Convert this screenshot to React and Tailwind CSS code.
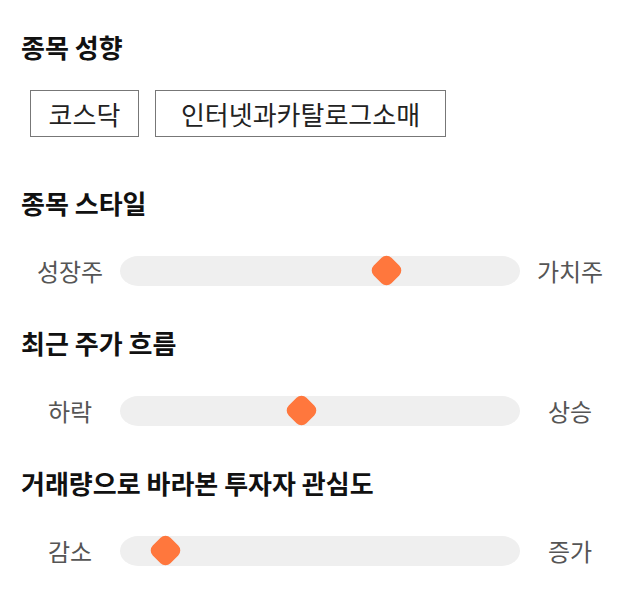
const sliders = [
  { title: '종목 스타일', left: '성장주', right: '가치주', value: 266 },
  { title: '최근 주가 흐름', left: '하락', right: '상승', value: 181 },
  { title: '거래량으로 바라본 투자자 관심도', left: '감소', right: '증가', value: 45 },
];

function Slider({ left, right, value }) {
  return (
    <div className="flex items-center h-[30px]">
      <span className="w-[100px] text-center text-[24px] leading-[30px] text-[#555]">{left}</span>
      <div className="relative flex-1 h-[30px] bg-[#efefef] rounded-[18px/15px]">
        <div
          className="absolute top-[-1px] w-[30px] h-[30px] -ml-[15px] flex items-center justify-center"
          style={{ left: value }}
        >
          <div className="w-[25px] h-[25px] rotate-45 rounded-[7px] bg-[#ff773d]" />
        </div>
      </div>
      <span className="w-[100px] text-center text-[24px] leading-[30px] text-[#555]">{right}</span>
    </div>
  );
}

export default function App() {
  return (
    <div className="w-[640px] h-[606px] bg-white px-[20px] pt-[32px] font-['Noto_Sans_CJK_KR','Noto_Sans',sans-serif]">
      <h2 className="px-[1px] text-[26px] font-bold leading-[30px] text-[#111]">종목 성향</h2>
      <div className="flex gap-[16px] mt-[28px] pl-[10px]">
        <div className="w-[109px] h-[47px] border border-[#777] flex items-center justify-center text-[26px] text-[#222]">
          코스닥
        </div>
        <div className="w-[291px] h-[47px] border border-[#777] flex items-center justify-center text-[26px] text-[#222]">
          인터넷과카탈로그소매
        </div>
      </div>

      {sliders.map((s, i) => (
        <div key={s.title} className={i === 0 ? 'mt-[51px]' : 'mt-[42px]'}>
          <h2 className="px-[1px] text-[26px] font-bold leading-[30px] text-[#111]">{s.title}</h2>
          <div className="mt-[38px]">
            <Slider left={s.left} right={s.right} value={s.value} />
          </div>
        </div>
      ))}
    </div>
  );
}
